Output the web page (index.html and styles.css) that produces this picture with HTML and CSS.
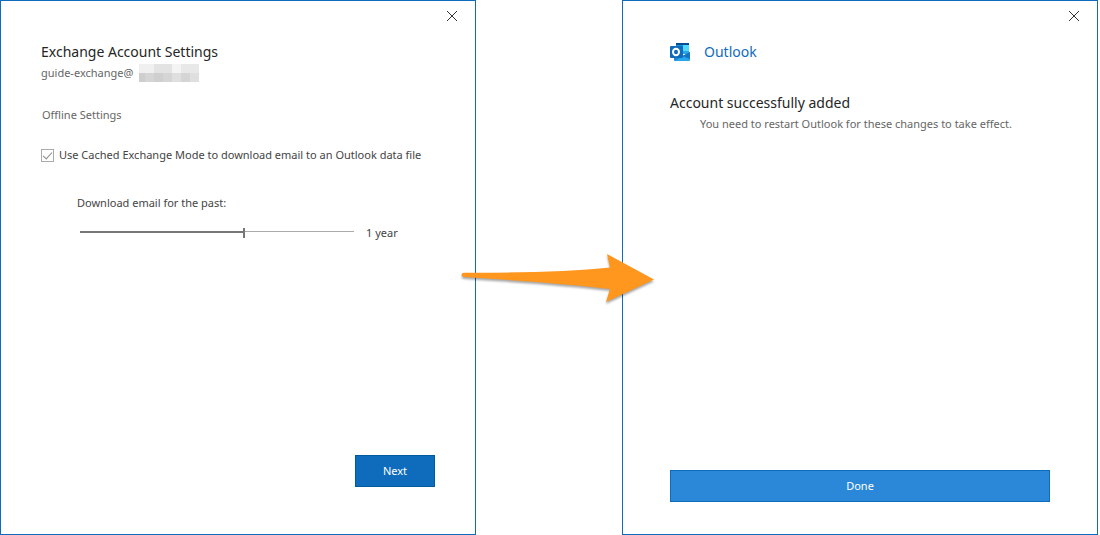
FILE: index.html
```html
<!DOCTYPE html>
<html lang="en">
<head>
<meta charset="utf-8">
<title>Exchange Account Settings</title>
<link rel="stylesheet" href="styles.css">
</head>
<body>
<main class="steps">
  <section class="dialog" aria-labelledby="settings-title">
    <div class="titlebar">
      <button class="close" type="button" aria-label="Close"><svg width="10" height="10" viewBox="0 0 10 10"><path d="M0 0L10 10M10 0L0 10"/></svg></button>
    </div>
    <form class="content content-settings">
      <h1 class="title" id="settings-title">Exchange Account Settings</h1>
      <p class="account">guide-exchange@<svg class="mosaic" width="61" height="18" viewBox="0 0 61 18" shape-rendering="crispEdges" aria-hidden="true">
        <path fill="#f0f0f0" d="M0 0h15v9H0z"/><path fill="#e3e3e3" d="M15 0h18v9H15z"/><path fill="#f4f4f4" d="M33 0h9v9h-9z"/><path fill="#e8e8e8" d="M42 0h18v9H42z"/>
        <path fill="#cecece" d="M0 9h6v9H0z"/><path fill="#d5d5d5" d="M6 9h9v9H6zM24 9h9v9h-9zM42 9h9v9h-9z"/><path fill="#cfcfcf" d="M15 9h9v9h-9z"/><path fill="#dfdfdf" d="M33 9h9v9h-9zM51 9h9v9h-9z"/>
      </svg></p>
      <h2 class="group">Offline Settings</h2>
      <label class="check"><input type="checkbox" checked><span>Use Cached Exchange Mode to download email to an Outlook data file</span></label>
      <div class="period">
        <label class="period-label" for="period">Download email for the past:</label>
        <div class="period-row">
          <input class="slider" id="period" type="range" min="0" max="100" value="60">
          <output for="period">1 year</output>
        </div>
      </div>
      <button class="button next" type="button">Next</button>
    </form>
  </section>
  <section class="dialog" aria-labelledby="done-title">
    <div class="titlebar">
      <button class="close" type="button" aria-label="Close"><svg width="10" height="10" viewBox="0 0 10 10"><path d="M0 0L10 10M10 0L0 10"/></svg></button>
    </div>
    <div class="content content-done">
      <div class="brand">
        <svg width="20" height="18" viewBox="0 0 20 18" aria-hidden="true">
          <path fill="#0a4c94" d="M6 0h13v2H6z"/>
          <path fill="#1490df" d="M6 2h7v7H6z"/>
          <path fill="#50d9ff" d="M13 2h6v6h-6z"/>
          <path fill="#28a8ea" d="M13 8h6v3h-6z"/>
          <path fill="#0f5fae" d="M6 8h7v6H6z"/>
          <path fill="#1a86d8" d="M4 9h9l-1 9H5q-1 0-1-1z"/>
          <path fill="#28a8ea" d="M20 9v8q0 1-1 1H5l8-5z"/>
          <path fill="#1573c4" d="M12 13l8-4v7z"/>
          <rect fill="#0f6cbd" y="3" width="13" height="12" rx="1"/>
          <ellipse cx="6" cy="9" rx="3" ry="3.2" fill="none" stroke="#fff" stroke-width="2"/>
        </svg>
        <span>Outlook</span>
      </div>
      <h1 class="title" id="done-title">Account successfully added</h1>
      <p class="note">You need to restart Outlook for these changes to take effect.</p>
      <button class="button done" type="button">Done</button>
    </div>
  </section>
  <svg class="arrow" width="200" height="60" viewBox="0 0 200 60" aria-hidden="true">
    <path d="M4 22.8Q96 23 150 17.5L147 4L194 29.5L146 52L150 39Q100 33 4 27Q1.5 26.5 1.5 25Q1.5 22.8 4 22.8Z"/>
  </svg>
</main>
</body>
</html>
```
FILE: styles.css
```css
* {
  box-sizing: border-box;
}

body {
  margin: 0;
  background: #fff;
  color: #444;
  font: 11px/18px "Noto Sans", "Open Sans", sans-serif;
}

h1, h2, p {
  margin: 0;
  font-weight: 400;
}

.steps {
  position: relative;
  display: flex;
  gap: 146px;
  min-height: 100vh;
  padding-right: 2px;
}

.dialog {
  flex: 1;
  display: flex;
  flex-direction: column;
  border: 1px solid #0f6cbd;
  background: #fff;
}

.titlebar {
  display: flex;
  justify-content: flex-end;
  padding-right: 7px;
}

.close {
  display: grid;
  place-items: center;
  width: 32px;
  height: 30px;
  padding: 0;
  border: 0;
  background: none;
}

.close path {
  stroke: #333;
  stroke-width: 1;
}

.content {
  flex: 1;
  display: flex;
  flex-direction: column;
}

.content-settings {
  padding: 11px 40px 47px;
}

.content-done {
  padding: 11px 47px 32px;
}

.title {
  color: #262626;
  font-size: 14px;
  line-height: 20px;
}

.account {
  display: flex;
  gap: 6px;
  margin-top: 2px;
  color: #666;
}

.group {
  margin: 24px 0 0 1px;
  color: #666;
  font-size: 11px;
}

.check {
  display: flex;
  align-items: center;
  gap: 5px;
  margin-top: 22px;
}

.check input {
  appearance: none;
  flex: none;
  width: 13px;
  height: 13px;
  margin: 0;
  border: 1px solid #ababab;
  display: grid;
  place-items: center;
}

.check input:checked::before {
  content: "";
  width: 8px;
  height: 4px;
  border: solid #888;
  border-width: 0 0 1px 1px;
  transform: translateY(-1px) rotate(-48deg);
}

.period {
  margin-top: 30px;
  padding-left: 36px;
}

.period-label {
  display: block;
}

.period-row {
  display: flex;
  align-items: center;
  gap: 12px;
  margin-top: 12px;
  padding-left: 3px;
}

.slider {
  appearance: none;
  flex: 0 1 274px;
  min-width: 0;
  height: 10px;
  margin: 0;
  background:
    linear-gradient(#777, #777) 0 3px / 60% 2px no-repeat,
    linear-gradient(#ababab, #ababab) 0 3px / 100% 1px no-repeat;
}

.slider::-webkit-slider-thumb {
  appearance: none;
  width: 2px;
  height: 10px;
  background: #777;
}

.button {
  height: 32px;
  margin-top: auto;
  padding: 0;
  border: 1px solid #005a9e;
  background: #0f6cbd;
  color: #fff;
  font: 11px/18px "Noto Sans", "Open Sans", sans-serif;
}

.next {
  align-self: flex-end;
  width: 80px;
}

.done {
  border-color: #0f6cbd;
  background: #2b88d8;
}

.brand {
  display: flex;
  align-items: center;
  gap: 14px;
  margin-bottom: 31px;
  color: #0f6cbd;
  font-size: 14px;
  line-height: 20px;
}

.note {
  margin-top: 2px;
  padding-left: 30px;
  color: #666;
}

.arrow {
  position: absolute;
  top: 250px;
  left: calc(50% - 90px);
  fill: #ff961e;
  filter: drop-shadow(0 2px 1px rgb(0 0 0 / 35%));
}
```
